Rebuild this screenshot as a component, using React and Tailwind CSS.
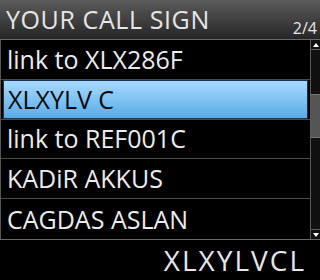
const rows = [
  { label: 'link to XLX286F' },
  { label: 'XLXYLV C', selected: true },
  { label: 'link to REF001C' },
  { label: 'KADiR AKKUS' },
  { label: 'CAGDAS ASLAN' },
];

const font = { fontFamily: '"Open Sans", "DejaVu Sans", sans-serif' };

export default function App() {
  return (
    <div
      className="w-[320px] h-[280px] bg-black overflow-hidden flex flex-col"
      style={font}
    >
      {/* header */}
      <div className="h-[40px] shrink-0 border-b border-[#6a6a6a] bg-gradient-to-b from-[#5c5c5c] to-[#262626] flex justify-between px-[6px]">
        <span className="text-[25px] leading-[40px] tracking-[0.6px] text-[#e6e6e6] -mt-[1px]">YOUR CALL SIGN</span>
        <span className="text-[16px] leading-none text-[#e6e6e6] self-end pb-[3px] -mr-[3px]">2/4</span>
      </div>

      {/* list + scrollbar */}
      <div className="flex h-[200px] shrink-0 border-b border-[#6a6a6a]">
        <div className="flex-1 flex flex-col border-l border-[#555]">
          {rows.map((row, i) => (
            <div
              key={i}
              className={`h-[40px] flex items-stretch ${i < rows.length - 1 ? 'border-b border-[#4a4a4a]' : ''}`}
            >
              {row.selected ? (
                <div className="flex-1 mx-[2px] border border-[#1a3550] bg-gradient-to-b from-[#a6daff] to-[#58abe6] flex items-center px-[4px]">
                  <span className="text-[25px] leading-none text-[#0a0a0a]">{row.label}</span>
                </div>
              ) : (
                <div className="flex-1 flex items-center px-[6px]">
                  <span className="text-[25px] leading-none text-[#ececec]">{row.label}</span>
                </div>
              )}
            </div>
          ))}
        </div>
        <div className="w-[10px] shrink-0 border-l border-[#5a5a5a] bg-[#101010] flex flex-col">
          <div className="h-[10px] border-b border-[#5a5a5a] flex items-center justify-center">
            <div className="w-0 h-0 border-l-[3px] border-r-[3px] border-b-[4px] border-l-transparent border-r-transparent border-b-white" />
          </div>
          <div className="h-[44px] mt-[44px] bg-[#555] border-y border-[#777]" />
          <div className="flex-1" />
          <div className="h-[10px] border-t border-[#5a5a5a] flex items-center justify-center">
            <div className="w-0 h-0 border-l-[3px] border-r-[3px] border-t-[4px] border-l-transparent border-r-transparent border-t-white" />
          </div>
        </div>
      </div>

      {/* footer */}
      <div className="flex-1 flex items-center justify-end pr-[14px]">
        <span className="text-[28px] leading-none tracking-[2px] text-[#e6e6e6]">XLXYLVCL</span>
      </div>
    </div>
  );
}
